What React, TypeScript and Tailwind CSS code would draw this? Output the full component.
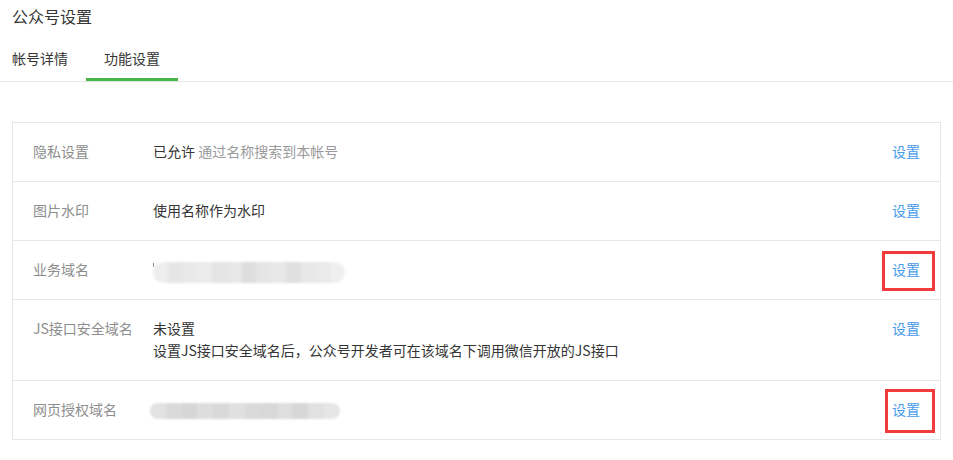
const font = { fontFamily: '"Noto Sans CJK SC", "Noto Sans", sans-serif' }

function Blur({ shades, width, height }: { shades: string[]; width: string; height: string }) {
  return (
    <div className={`flex overflow-hidden rounded-full blur-[1px] ${width} ${height}`}>
      {shades.map((c, i) => (
        <div key={i} className="h-full flex-1" style={{ background: c }} />
      ))}
    </div>
  )
}

const shadesA = ["#eeeeee", "#e6e6e6", "#e9e9e9", "#ececec", "#e4e4e4", "#e7e7e7", "#dedede", "#e5e5e5", "#e8e8e8", "#e0e0e0", "#e7e7e7", "#eaeaea", "#efefef"]
const shadesB = ["#e2e2e2", "#dadada", "#d6d6d6", "#dddddd", "#d9d9d9", "#e0e0e0", "#dadada", "#d8d8d8", "#dedede", "#d7d7d7", "#e1e1e1", "#e6e6e6"]

type Row = { label: string; content: React.ReactNode; boxed?: "a" | "b" }

export default function App() {
  const rows: Row[] = [
    {
      label: "隐私设置",
      content: (
        <span>
          已允许 <span className="text-[#9a9a9a]">通过名称搜索到本帐号</span>
        </span>
      ),
    },
    { label: "图片水印", content: <span>使用名称作为水印</span> },
    {
      label: "业务域名",
      content: (
        <div className="relative h-[22px] pt-[4px]">
          <span className="absolute left-0 top-[5px] h-[4px] w-[1px] bg-[#888]" />
          <Blur shades={shadesA} width="w-[192px]" height="h-[21px]" />
        </div>
      ),
      boxed: "a",
    },
    {
      label: "JS接口安全域名",
      content: (
        <div className="flex flex-col">
          <span>未设置</span>
          <span>设置JS接口安全域名后，公众号开发者可在该域名下调用微信开放的JS接口</span>
        </div>
      ),
    },
    {
      label: "网页授权域名",
      content: (
        <div className="-ml-[3px] flex h-[22px] items-center pt-[3px]">
          <Blur shades={shadesB} width="w-[190px]" height="h-[16px]" />
        </div>
      ),
      boxed: "b",
    },
  ]

  return (
    <div className="min-h-[460px] w-[953px] bg-white text-[14px] text-[#353535]" style={font}>
      <div className="px-[12px] pt-[5px] text-[16px] leading-[22px]">公众号设置</div>
      <div className="mt-[20px] flex border-b border-[#e4e8eb] pl-[12px]">
        <div className="pb-[12px] leading-[22px] text-[#353535]">帐号详情</div>
        <div className="ml-[18px] border-b-[3px] border-[#44b549] px-[18px] pb-[9px] leading-[22px]">功能设置</div>
      </div>
      <div className="mx-[12px] mt-[40px] border border-[#e7e7eb]">
        {rows.map((r, i) => (
          <div
            key={i}
            className={`flex items-start pt-[17px] pb-[19px] leading-[22px] ${i > 0 ? "border-t border-[#e7e7eb]" : ""}`}
          >
            <div className="w-[140px] shrink-0 pl-[20px] text-[#8d8d8d]">{r.label}</div>
            <div className="flex-1">{r.content}</div>
            <div className="shrink-0 pr-[20px] pl-[20px]">
              <span className="relative block text-[#459ae9]">
                设置
                {r.boxed === "a" && (
                  <span className="absolute -left-[10px] -right-[15px] -top-[7px] -bottom-[11px] border-[3px] border-[#f23c3c]" />
                )}
                {r.boxed === "b" && (
                  <span className="absolute -left-[7px] -right-[15px] -top-[9px] -bottom-[13px] border-[3px] border-[#f23c3c]" />
                )}
              </span>
            </div>
          </div>
        ))}
      </div>
    </div>
  )
}
